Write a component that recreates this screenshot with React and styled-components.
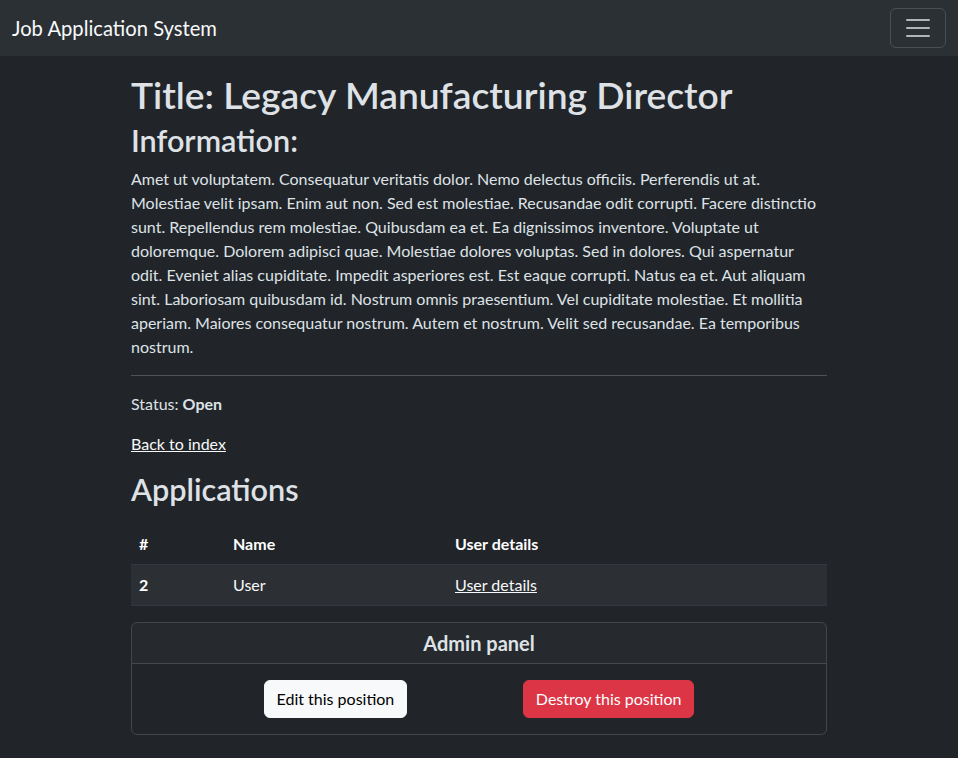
import styled, { createGlobalStyle } from "styled-components";

const GlobalStyle = createGlobalStyle`
  html, body {
    margin: 0;
    padding: 0;
  }
  body {
    background: #212529;
    color: #dee2e6;
    font-family: Lato, "Open Sans", sans-serif;
    font-size: 16px;
    line-height: 1.5;
  }
  * {
    box-sizing: border-box;
  }
`;

const Navbar = styled.nav`
  background: #2b3035;
  padding: 8px 12px;
  display: flex;
  align-items: center;
  justify-content: space-between;
`;

const Brand = styled.a`
  color: #f8f9fa;
  font-size: 20.2px;
  line-height: 30px;
  text-decoration: none;
`;

const Toggler = styled.button`
  width: 56px;
  height: 40px;
  padding: 4px 12px;
  background: transparent;
  border: 1px solid rgba(255, 255, 255, 0.15);
  border-radius: 6px;
  display: flex;
  align-items: center;
  justify-content: center;
`;

const Container = styled.main`
  width: 720px;
  margin: 0 auto;
  padding: 17px 12px 24px;
`;

const Title = styled.h1`
  font-size: 37.2px;
  font-weight: 600;
  line-height: 43.7px;
  margin: 0 0 6px;
`;

const Heading = styled.h2`
  font-size: 30.6px;
  font-weight: 600;
  line-height: 35.8px;
  margin: 0 0 ${(p) => p.$mb || 8}px;
`;

const Paragraph = styled.p`
  margin: 0 0 16px;
`;

const Rule = styled.hr`
  border: 0;
  border-top: 1px solid #dee2e6;
  opacity: 0.25;
  margin: 0 0 16px;
`;

const Link = styled.a`
  color: #f8f9fa;
  text-decoration: underline;
`;

const Table = styled.table`
  width: 100%;
  border-collapse: collapse;
  margin-bottom: 16px;
  text-align: left;
`;

const Row = styled.tr`
  background: ${(p) => (p.$striped ? "#2c3034" : "transparent")};
  border-bottom: 1px solid #32383e;
`;

const HeadCell = styled.th`
  padding: 8px;
  font-weight: 700;
  color: #fff;
  width: ${(p) => p.$w || "auto"};
`;

const Cell = styled.td`
  padding: 8px;
  color: #f8f9fa;
`;

const Card = styled.div`
  border: 1px solid rgba(222, 226, 230, 0.175);
  border-radius: 6px;
  overflow: hidden;
`;

const CardHeader = styled.div`
  padding: 8px 16px;
  background: rgba(222, 226, 230, 0.03);
  border-bottom: 1px solid rgba(222, 226, 230, 0.175);
  text-align: center;
  font-size: 20px;
  font-weight: 700;
  line-height: 24px;
`;

const CardBody = styled.div`
  padding: 16px;
  display: flex;
  justify-content: space-evenly;
`;

const Button = styled.a`
  display: inline-block;
  padding: 6px 12px;
  border: 1px solid ${(p) => (p.$danger ? "#dc3545" : "#f8f9fa")};
  border-radius: 6px;
  background: ${(p) => (p.$danger ? "#dc3545" : "#f8f9fa")};
  color: ${(p) => (p.$danger ? "#fff" : "#000")};
  text-decoration: none;
  line-height: 24px;
`;

const text =
  "Amet ut voluptatem. Consequatur veritatis dolor. Nemo delectus officiis. Perferendis ut at. Molestiae velit ipsam. Enim aut non. Sed est molestiae. Recusandae odit corrupti. Facere distinctio sunt. Repellendus rem molestiae. Quibusdam ea et. Ea dignissimos inventore. Voluptate ut doloremque. Dolorem adipisci quae. Molestiae dolores voluptas. Sed in dolores. Qui aspernatur odit. Eveniet alias cupiditate. Impedit asperiores est. Est eaque corrupti. Natus ea et. Aut aliquam sint. Laboriosam quibusdam id. Nostrum omnis praesentium. Vel cupiditate molestiae. Et mollitia aperiam. Maiores consequatur nostrum. Autem et nostrum. Velit sed recusandae. Ea temporibus nostrum.";

export default function App() {
  return (
    <>
      <GlobalStyle />
      <Navbar>
        <Brand href="#">Job Application System</Brand>
        <Toggler aria-label="Toggle navigation">
          <svg width="30" height="30" viewBox="0 0 30 30">
            <path
              d="M4 7h22M4 15h22M4 23h22"
              stroke="rgba(222,226,230,0.75)"
              strokeWidth="2"
              strokeLinecap="round"
            />
          </svg>
        </Toggler>
      </Navbar>
      <Container>
        <Title>Title: Legacy Manufacturing Director</Title>
        <Heading>Information:</Heading>
        <Paragraph>{text}</Paragraph>
        <Rule />
        <Paragraph>
          Status: <strong>Open</strong>
        </Paragraph>
        <Paragraph>
          <Link href="#">Back to index</Link>
        </Paragraph>
        <Heading $mb={17}>Applications</Heading>
        <Table>
          <thead>
            <Row>
              <HeadCell $w="94px">#</HeadCell>
              <HeadCell $w="222px">Name</HeadCell>
              <HeadCell>User details</HeadCell>
            </Row>
          </thead>
          <tbody>
            <Row $striped>
              <HeadCell>2</HeadCell>
              <Cell>User</Cell>
              <Cell>
                <Link href="#">User details</Link>
              </Cell>
            </Row>
          </tbody>
        </Table>
        <Card>
          <CardHeader>Admin panel</CardHeader>
          <CardBody>
            <Button href="#">Edit this position</Button>
            <Button href="#" $danger>
              Destroy this position
            </Button>
          </CardBody>
        </Card>
      </Container>
    </>
  );
}
